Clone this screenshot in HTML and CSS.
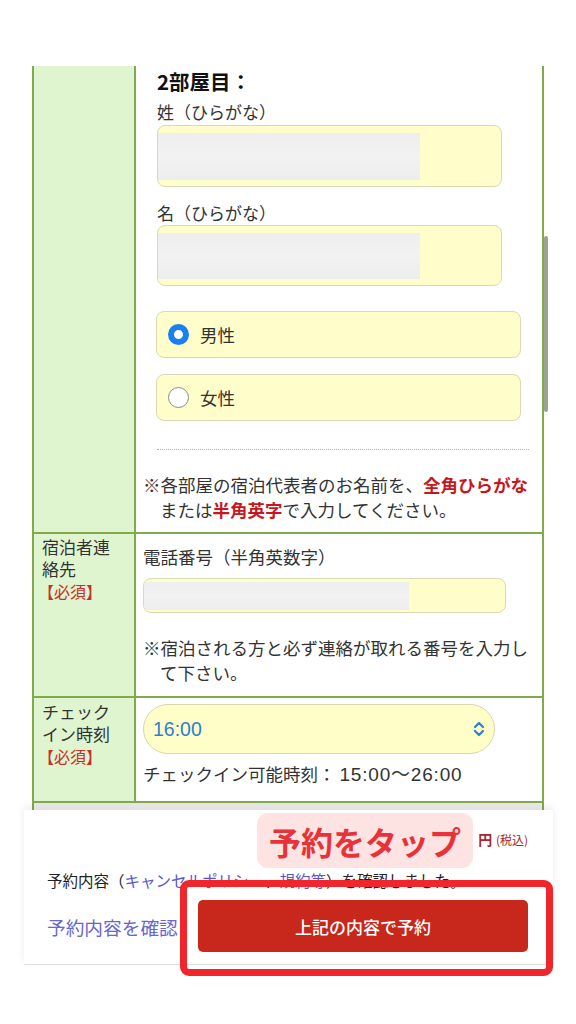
FILE: index.html
```html
<!DOCTYPE html>
<html lang="ja">
<head>
<meta charset="utf-8">
<title>予約</title>
<link rel="stylesheet" href="styles.css">
</head>
<body>
<div class="topbar"></div>
<div class="table">
  <div class="row row1">
    <div class="th"></div>
    <div class="td">
      <div class="room">
        <div class="room-title">2部屋目：</div>
        <div class="flabel">姓（ひらがな）</div>
        <div class="field tall"><span class="blur"></span></div>
        <div class="flabel gap">名（ひらがな）</div>
        <div class="field tall"><span class="blur"></span></div>
        <div class="radio first"><span class="dot on"></span><span class="rtext">男性</span></div>
        <div class="radio"><span class="dot"></span><span class="rtext">女性</span></div>
        <div class="dots"></div>
      </div>
      <p class="note">※各部屋の宿泊代表者のお名前を、<b class="red">全角ひらがな</b>または<b class="red">半角英字</b>で入力してください。</p>
    </div>
  </div>
  <div class="row row2">
    <div class="th"><span class="lt">宿泊者連絡先</span><span class="req">【必須】</span></div>
    <div class="td">
      <div class="flabel2">電話番号（半角英数字）</div>
      <div class="field phone"><span class="blur"></span></div>
      <p class="note note2">※宿泊される方と必ず連絡が取れる番号を入力して下さい。</p>
    </div>
  </div>
  <div class="row row3">
    <div class="th th3"><span class="lt">チェックイン時刻</span><span class="req">【必須】</span></div>
    <div class="td">
      <div class="select"><span class="sval">16:00</span>
        <svg class="chev" width="12" height="18" viewBox="0 0 12 18"><path d="M2 7 L6 3 L10 7 M2 11 L6 15 L10 11" fill="none" stroke="#2c7fd0" stroke-width="2.2" stroke-linecap="round" stroke-linejoin="round"/></svg>
      </div>
      <div class="avail">チェックイン可能時刻：<span class="num">15:00〜26:00</span></div>
    </div>
  </div>
  <div class="row4"></div>
</div>

<div class="footer">
  <div class="price"><span class="yen">円</span> <span class="tax">(税込)</span></div>
  <div class="agree">予約内容（<span class="lnk">キャンセルポリシー</span>、<span class="lnk">規約等</span>）を確認しました。</div>
  <div class="actions">
    <span class="confirm">予約内容を確認</span>
    <span class="btn">上記の内容で予約</span>
  </div>
</div>

<div class="scrollbar"></div>
<div class="callout">予約をタップ</div>
<div class="redbox"></div>
</body>
</html>
```

FILE: styles.css
```css
* { box-sizing: border-box; }
html, body { margin: 0; padding: 0; background: #fff; }
body {
  width: 576px;
  height: 1024px;
  overflow: hidden;
  position: relative;
  font-family: "Noto Sans CJK JP", "Noto Sans", sans-serif;
  color: #222;
}
.topbar { height: 66px; background: #fff; }

.table {
  margin: 0 32px;
  border-left: 2px solid #80aa4c;
  border-right: 2px solid #80aa4c;
}
.row {
  display: flex;
  border-bottom: 2px solid #80aa4c;
}
.th {
  width: 102px;
  flex: none;
  background: #dff5cf;
  border-right: 2px solid #80aa4c;
  padding: 2px 0 0 8px;
  font-size: 17px;
  line-height: 21.5px;
  color: #333;
}
.th3 { padding-top: 3px; }
.lt { display: block; width: 72px; }
.req {
  display: block;
  color: #c4302a;
  font-size: 16px;
  line-height: 20px;
  margin-top: 2px;
  margin-left: -4px;
}
.td {
  flex: 1;
  padding: 0 10px 0 7px;
}

/* row 1 */
.room { margin: 0 3px 0 14px; }
.room-title {
  font-size: 20.5px;
  font-weight: 700;
  line-height: 30px;
  color: #111;
}
.flabel {
  font-size: 17px;
  line-height: 22px;
  margin-top: 5px;
  color: #333;
}
.flabel.gap { margin-top: 15px; }
.field {
  background: #fffdc9;
  border: 1.5px solid #dbd9b6;
  border-radius: 8px;
  position: relative;
  overflow: hidden;
}
.field.tall { width: 345px; height: 62px; margin-top: 2px; }
.flabel.gap + .field.tall { margin-top: 1px; height: 61px; }
.blur {
  position: absolute;
  left: 0;
  top: 7px;
  bottom: 6px;
  width: 262px;
  background: linear-gradient(180deg, #eeeeee, #f2f2f2 50%, #ededed);
}
.radio {
  width: 365px;
  height: 47px;
  margin-top: 16px;
  margin-left: -1px;
  background: #fffdc9;
  border: 1.5px solid #dbd9b6;
  border-radius: 8px;
  display: flex;
  align-items: center;
  padding-left: 11px;
}
.radio.first { margin-top: 25px; }
.dot {
  width: 21px;
  height: 21px;
  border-radius: 50%;
  border: 1.5px solid #8a8a8a;
  background: #fff;
  flex: none;
}
.dot.on {
  border: 6.5px solid #1a7ff0;
  background: #fff;
}
.rtext {
  margin-left: 11px;
  font-size: 17.5px;
  line-height: 22px;
  color: #333;
}
.dots {
  margin-top: 28px;
  border-top: 1.5px dotted #b4b4b4;
  height: 0;
}
.note {
  margin: 22px 0 0 0;
  padding: 0 0 10px 17px;
  text-indent: -17px;
  font-size: 17.5px;
  line-height: 25px;
  color: #333;
}
.red { color: #c8161d; font-weight: 700; }

/* row 2 */
.flabel2 {
  margin-top: 12px;
  font-size: 17.5px;
  line-height: 22px;
  color: #333;
}
.field.phone { width: 363px; height: 35px; margin-top: 10px; }
.field.phone .blur { top: 3px; bottom: 2px; width: 265px; }
.note2 { margin-top: 22px; padding-bottom: 11px; }

/* row 3 */
.select {
  margin-top: 6px;
  width: 352px;
  height: 50px;
  border: 1.5px solid #d9d6b0;
  border-radius: 25px;
  background: #fffdc8;
  display: flex;
  align-items: center;
  padding: 0 9px 0 9px;
}
.sval {
  font-family: "Liberation Sans", "Noto Sans", sans-serif;
  font-size: 19.5px;
  color: #2c7fd0;
  flex: 1;
}
.chev { flex: none; }
.avail {
  margin-top: 9px;
  padding-bottom: 15px;
  font-size: 17.5px;
  line-height: 22px;
  color: #333;
}
.num {
  font-family: "Liberation Sans", "Noto Sans CJK JP", sans-serif;
  font-size: 19px;
  letter-spacing: 0.8px;
  margin-left: 4px;
}
.row4 {
  height: 60px;
  background: linear-gradient(180deg, #e9e9e9, #f4f4f4 10px, #f6f6f6);
}

/* footer */
.footer {
  position: absolute;
  top: 810px;
  left: 24px;
  width: 529px;
  height: 155px;
  background: #fff;
  border-bottom: 1px solid #dedede;
  box-shadow: 0 -3px 8px rgba(0,0,0,0.08);
  padding: 16px 25px 0 23px;
}
.price {
  text-align: right;
  line-height: 24px;
  color: #a3282a;
}
.yen { font-size: 14px; font-weight: 700; }
.tax { font-size: 12px; }
.agree {
  margin-top: 17px;
  font-size: 15.5px;
  line-height: 22px;
  color: #222;
  white-space: nowrap;
}
.lnk { color: #5656d0; }
.actions {
  margin-top: 9px;
  display: flex;
  align-items: center;
}
.confirm {
  font-size: 18.7px;
  color: #6767cf;
  white-space: nowrap;
}
.btn {
  margin-left: auto;
  width: 330px;
  height: 52px;
  border-radius: 5px;
  background: #c8281b;
  color: #fff;
  font-size: 17px;
  font-weight: 500;
  display: flex;
  align-items: center;
  justify-content: center;
}

/* overlays */
.scrollbar {
  position: absolute;
  left: 544px;
  top: 236px;
  width: 4px;
  height: 176px;
  border-radius: 2px;
  background: #98a392;
}
.callout {
  position: absolute;
  left: 257px;
  top: 813px;
  width: 216px;
  height: 55px;
  border-radius: 11px;
  background: #fde4e2;
  color: #e8323a;
  font-size: 32px;
  font-weight: 700;
  display: flex;
  align-items: center;
  justify-content: center;
}
.redbox {
  position: absolute;
  left: 180px;
  top: 880px;
  width: 373px;
  height: 96px;
  border: 7px solid #f0262d;
  border-radius: 9px;
}
```
